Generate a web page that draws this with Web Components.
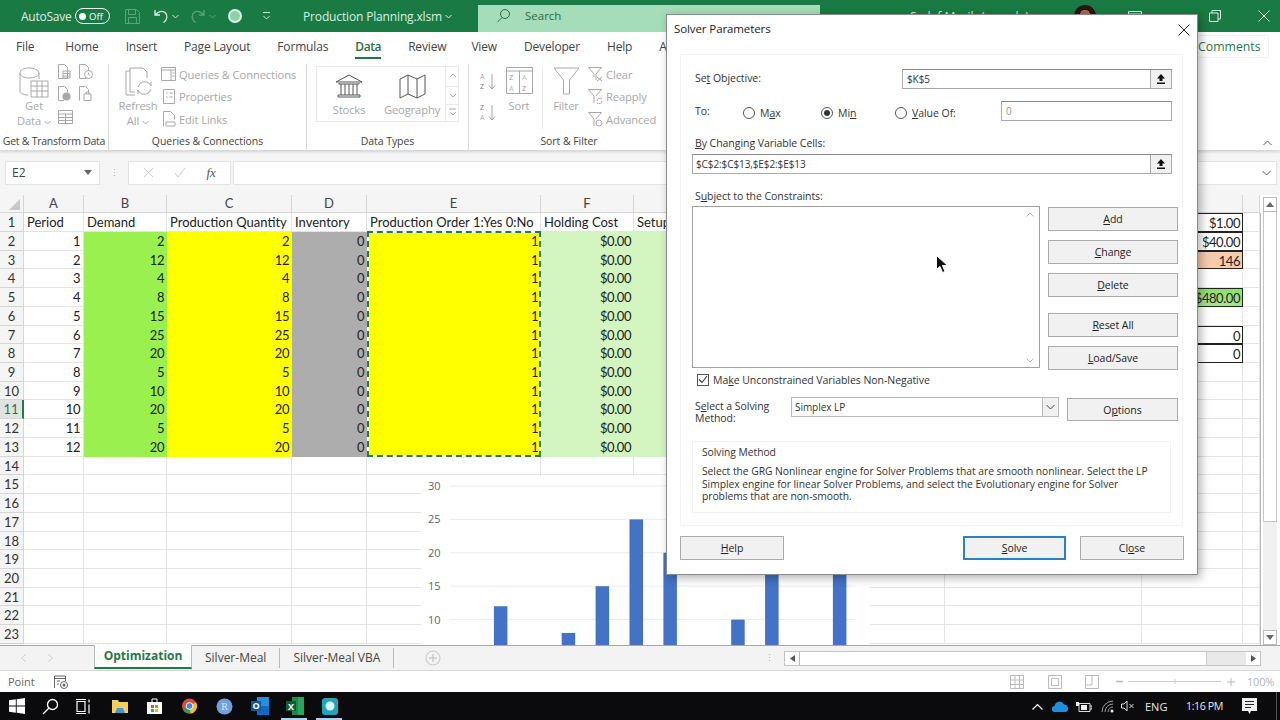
<!DOCTYPE html>
<html><head><meta charset="utf-8"><title>Production Planning</title>
<style>
html,body{margin:0;padding:0;width:1280px;height:720px;overflow:hidden;background:#fff}
body{font-family:"Open Sans","Noto Sans",sans-serif;color:#333}
</style></head>
<body>
<x-app></x-app>
<script>
function reg(tag,css,html){
  customElements.define(tag,class extends HTMLElement{
    constructor(){super();this.attachShadow({mode:'open'});}
    connectedCallback(){
      if(this._done)return;this._done=true;
      this.shadowRoot.innerHTML='<style>'+css+'</style>'+(typeof html==='function'?html(this):html);
    }
  });
}
const S='fill="none" stroke="#a8a8a8" stroke-width="1"';
const chev=(c)=>`<svg width="7" height="5" viewBox="0 0 7 5" style="margin-left:3px;vertical-align:middle"><path d="M.5 1l3 3 3-3" fill="none" stroke="${c||'#a8a8a8'}"/></svg>`;

/* -------- generic pieces -------- */
reg('x-title-bar',`
:host{display:flex;align-items:center;height:32px;background:#1a7a43;color:#dcefe3;font-size:12px;flex:none;box-sizing:border-box;padding-left:21px}
.as{width:50px;letter-spacing:-.25px}
.tog{width:35px;height:16px;margin-left:4px;box-sizing:border-box;border:1.5px solid #fff;border-radius:9px;display:flex;align-items:center;padding-left:3px;gap:3px;font-size:9.5px;color:#fff}
.tog i{width:7px;height:7px;border-radius:50%;background:#fff}
svg{display:block;flex:none}
.file{width:175px;color:#dcefe3;display:flex;align-items:center;font-size:12px;letter-spacing:-.15px}
.search{width:342px;height:27px;margin-top:5px;background:#a5dcb9;color:#2f6b48;display:flex;align-items:center;box-sizing:border-box;padding:0 0 6px 18px;gap:14px;font-size:11.5px}
.user{margin-left:90px;width:153px;font-size:12px;color:#d8ebdf;white-space:nowrap;overflow:hidden}
.av{width:22px;height:22px;border-radius:50%;background:radial-gradient(circle at 50% 45%,#a8694a 0 30%,#2a140c 32%);margin-left:11px}
`,`<span class="as">AutoSave</span><span class="tog"><i></i>Off</span>
<svg style="margin-left:15px" width="15" height="15" viewBox="0 0 15 15"><path d="M.5.5h11l3 3v11H.5zM3.500.5v5h7v-5M3.500 14.500v-6h8v6" fill="none" stroke="#5aa57a"/></svg>
<svg style="margin-left:13px" width="16" height="16" viewBox="0 0 16 16"><path d="M2 2v5h5M2.500 7C5 3.500 9 2.500 12 4.500c3 2.500 2.500 7-1.500 10" fill="none" stroke="#dcefe3" stroke-width="1.300"/></svg>
<svg style="margin-left:3px" width="7" height="5" viewBox="0 0 7 5"><path d="M.5 1l3 3 3-3" fill="none" stroke="#cfe6d8"/></svg>
<svg style="margin-left:11px" width="16" height="16" viewBox="0 0 16 16"><path d="M14 2v5H9M13.500 7C11 3.500 7 2.500 4 4.500c-3 2.500-2.500 7 1.500 10" fill="none" stroke="#5aa57a" stroke-width="1.300"/></svg>
<svg style="margin-left:3px" width="7" height="5" viewBox="0 0 7 5"><path d="M.5 1l3 3 3-3" fill="none" stroke="#5aa57a"/></svg>
<svg style="margin-left:11px" width="16" height="16" viewBox="0 0 16 16"><circle cx="8" cy="8" r="7" fill="#dff0e5"/><circle cx="8" cy="8" r="5" fill="#8fd0a8"/></svg>
<svg style="margin-left:19px" width="9" height="8" viewBox="0 0 9 8"><path d="M1 .5h7M1.500 4l3 3 3-3" fill="none" stroke="#cfe6d8"/></svg>
<span class="file" style="margin-left:32px">Production Planning.xlsm${chev('#dcefe3')}</span>
<span class="search"><svg width="15" height="15" viewBox="0 0 15 15"><circle cx="9" cy="6" r="4.500" fill="none" stroke="#2f6b48"/><path d="M6 9.500L1.500 14" stroke="#2f6b48"/></svg>Search</span>
<span class="user">Sadaf Masih (sample)</span><span class="av"></span>
<svg style="margin-left:32px" width="14" height="14" viewBox="0 0 14 14"><path d="M.5 2.500h13v10H.5zM.5 5h13M7 9V5.500" fill="none" stroke="#dcefe3"/></svg>
<svg style="margin-left:67px" width="12" height="12" viewBox="0 0 12 12"><path d="M.5 3h8.500v8.500H.5zM3 3V.5h8.500V9H9" fill="none" stroke="#dcefe3"/></svg>
<svg style="margin-left:37px" width="12" height="12" viewBox="0 0 12 12"><path d="M.5.5l11 11M11.500.5l-11 11" stroke="#dcefe3"/></svg>`);

reg('x-ribbon-tabs',`
:host{display:flex;align-items:center;height:30px;flex:none;background:#fff;font-size:12px;letter-spacing:-.16px;color:#444;padding:0 0 2px 16px;gap:27px;box-sizing:border-box;position:relative}
span{position:relative;white-space:nowrap}
.on{color:#1f7144;font-weight:600;letter-spacing:-.4px}
.on::after{content:"";position:absolute;left:0;right:0;top:19px;height:2px;background:#1f7a45}
.cm{position:absolute;left:1198px;top:3px;width:70px;height:21px;line-height:21px;border:1px solid #f0f0f0;border-left:0;border-radius:2px;color:#1f7a45;box-sizing:content-box;letter-spacing:0;font-size:12.3px}
`,`<span style="margin-right:4px">File</span><span>Home</span><span>Insert</span><span>Page Layout</span><span>Formulas</span><span class="on">Data</span><span>Review</span><span style="margin-left:-2px">View</span><span>Developer</span><span>Help</span><span>Automate</span><span class="cm">Comments</span>`);

reg('x-rgroup',`
:host{display:flex;flex-direction:column;height:86px;margin-top:2px;border-right:1px solid #d9d9d9;box-sizing:border-box;flex:none;font-size:11.200px;letter-spacing:-.12px;color:#a8a8a8;position:relative}
.b{flex:1;display:flex;min-height:0}
.l{height:16px;line-height:15px;text-align:center;color:#444;font-size:10.500px;letter-spacing:-.05px;white-space:nowrap}
`,t=>`<div class="b"><slot></slot></div><div class="l" style="${t.getAttribute('lstyle')||''}">${t.getAttribute('label')}</div>`);

reg('x-rbig',`
:host{display:flex;flex-direction:column;align-items:center;flex:none;line-height:15px;color:#a8a8a8;white-space:nowrap}
`,`<slot></slot>`);

reg('x-rsmall',`
:host{display:flex;align-items:center;height:22.500px;color:#a8a8a8;white-space:nowrap}
::slotted(svg){flex:none;margin-right:3px}
`,`<slot></slot>`);

reg('x-ribbon',`
:host{display:flex;height:88px;flex:none;background:#fff;box-shadow:0 2px 3px rgba(0,0,0,.14);position:relative;z-index:2}
`,`
<x-rgroup label="Get &amp; Transform Data" lstyle="letter-spacing:-.25px" style="width:109px">
  <x-rbig style="width:58px;margin-left:5px;padding-top:3px">
    <svg width="30" height="31" viewBox="0 0 30 31"><path d="M1 6v18c0 2 3 4 8 4M1 6c0-3 4-5 9-5s10 2 10 5-5 5-10 5S1 9 1 6zM20 6v6" ${S}/><path d="M12 14h17v16H12zM12 19h17M12 24h17M18 14v16M23 14v16" ${S}/></svg>
    <span style="margin-top:0">Get</span><span>Data${chev()}</span>
  </x-rbig>
  <div style="display:grid;grid-template-columns:21px 14px;grid-auto-rows:22px;margin-left:-5px">
    <svg width="13" height="15" viewBox="0 0 13 15"><path d="M.5.5h6l3 3v11h-9zM5 7h7v7H5zM5 9.500h7M5 12h7" ${S}/></svg>
    <svg width="14" height="15" viewBox="0 0 14 15"><path d="M8 14.500H.5V.5h6l3 3v3" ${S}/><circle cx="9.500" cy="10.500" r="4" ${S}/><path d="M9.500 8.500v2l1.500 1" ${S}/></svg>
    <svg width="13" height="15" viewBox="0 0 13 15"><path d="M6 14.500H.5V.5h6l3 3v3" ${S}/><circle cx="8.500" cy="10.500" r="4" fill="#a8a8a8"/></svg>
    <svg width="14" height="15" viewBox="0 0 14 15"><path d="M.5 14.500V.5h6l3 3v3M5 8h7v6.500H5zM7 8V6h3v2" ${S}/></svg>
    <svg width="15" height="14" viewBox="0 0 15 14" style="margin-top:2px"><path d="M.5.5h14v13H.5zM.5 4h14M.5 7.500h14M.5 10.500h14M7.500 4v9.500" ${S}/></svg>
  </div>
</x-rgroup>
<x-rgroup label="Queries &amp; Connections" style="width:198px">
  <x-rbig style="width:54px;padding:3px 0 0 2px">
    <svg width="36" height="31" viewBox="0 0 36 31"><path d="M10 1h13l4 4v6M6 4v24h9M10 1v1M6 4h4" ${S}/><path d="M10 1v24h5" ${S}/><path d="M18 20a7 7 0 0 1 12-3l1 2v-4M31 22a7 7 0 0 1-12 3l-1-2v4" ${S}/></svg>
    <span>Refresh</span><span>All${chev()}</span>
  </x-rbig>
  <div style="display:flex;flex-direction:column;margin:-1px 0 0 -4px">
    <x-rsmall><svg width="15" height="14" viewBox="0 0 15 14"><path d="M.5.5h14v13H.5zM.5 3h14M10 3v10.500M11.500 6h2M11.500 9h2" ${S}/></svg>Queries &amp; Connections</x-rsmall>
    <x-rsmall style="margin-left:2px"><svg width="13" height="15" viewBox="0 0 13 15"><path d="M.5.5h11v14H.5zM3 4h1.500M3 8h1.500M6.500 4h3M6.500 8h3" ${S}/></svg>Properties</x-rsmall>
    <x-rsmall style="margin-left:2px"><svg width="13" height="16" viewBox="0 0 13 16"><path d="M.5 15.500V.5h7l4 4v4M3 11h9v4H3z" ${S}/></svg>Edit Links</x-rsmall>
  </div>
</x-rgroup>
<x-rgroup label="Data Types" style="width:162px">
  <div style="margin:2px 0 0 9px;width:143px;height:56px;box-sizing:border-box;border:1px solid #e8e8e8;display:flex">
    <x-rbig style="width:64px;padding-top:7px">
      <svg width="28" height="25" viewBox="0 0 28 25"><path d="M1 8L14 1l13 7zM4 9v1h20V9M6 10v11M10 10v11M14 10v11M18 10v11M22 10v11M3 21h22v2H3z" fill="none" stroke="#555"/></svg>
      <span style="margin-top:3px">Stocks</span>
    </x-rbig>
    <x-rbig style="width:64px;padding-top:7px">
      <svg width="28" height="25" viewBox="0 0 28 25"><path d="M1 5l8-4 9 4 8-4v19l-8 4-9-4-8 4zM9 1v19M18 5v19" fill="none" stroke="#555"/></svg>
      <span style="margin-top:3px;margin-left:-2px">Geography</span>
    </x-rbig>
    <div style="margin-left:auto;width:14px;border-left:1px solid #e8e8e8;display:grid;grid-template-rows:19px 18px 1fr">
      <svg width="13" height="19" viewBox="0 0 13 19" style="border-bottom:1px solid #e8e8e8"><path d="M4 10l3-3 3 3" ${S}/></svg>
      <svg width="13" height="18" viewBox="0 0 13 18" style="border-bottom:1px solid #e8e8e8"><path d="M4 8l3 3 3-3" ${S}/></svg>
      <svg width="13" height="16" viewBox="0 0 13 16"><path d="M3 5h7M4 8l3 3 3-3" ${S}/></svg>
    </div>
  </div>
</x-rgroup>
<x-rgroup label="Sort &amp; Filter" style="width:200px;border:0">
  <div style="display:flex;flex-direction:column;margin:9px 0 0 11px;width:25px;gap:14px">
    <svg width="17" height="17" viewBox="0 0 17 17"><text x="0" y="6" font-size="7" fill="#aaa" font-family="Open Sans">A</text><text x="0" y="16" font-size="7" fill="#777" font-family="Open Sans">Z</text><path d="M12 1v15M9 12.500l3 3.500 3-3.500" ${S}/></svg>
    <svg width="17" height="17" viewBox="0 0 17 17"><text x="0" y="6" font-size="7" fill="#777" font-family="Open Sans">Z</text><text x="0" y="16" font-size="7" fill="#aaa" font-family="Open Sans">A</text><path d="M12 1v15M9 12.500l3 3.500 3-3.500" ${S}/></svg>
  </div>
  <x-rbig style="width:28px;padding-top:3px;margin-right:9px">
    <svg width="27" height="27" viewBox="0 0 27 27"><path d="M.5.5h26v26H.5zM.5 4h26M13.500 4v22.500" ${S}/><text x="3" y="13" font-size="7.300" fill="#999" font-family="Open Sans">Z</text><text x="3" y="24" font-size="7.300" fill="#bbb" font-family="Open Sans">A</text><text x="16" y="13" font-size="7.300" fill="#bbb" font-family="Open Sans">A</text><text x="16" y="24" font-size="7.300" fill="#999" font-family="Open Sans">Z</text></svg>
    <span style="margin-top:4px">Sort</span>
  </x-rbig>
  <div style="width:1px;height:62px;margin-top:3px;background:#eaeaea;flex:none"></div>
  <x-rbig style="width:46px;padding-top:3px">
    <svg width="27" height="28" viewBox="0 0 27 28"><path d="M1 1h25L16.500 13v14h-6V13z" ${S}/></svg>
    <span style="margin-top:3px">Filter</span>
  </x-rbig>
  <div style="display:flex;flex-direction:column;margin:-1px 0 0 -1px">
    <x-rsmall><svg width="15" height="15" viewBox="0 0 15 15"><path d="M.5.5h13L8 7v6M.5.5L6 7v3M9 10l5 4M14 10l-5 4" ${S}/></svg>Clear</x-rsmall>
    <x-rsmall><svg width="15" height="15" viewBox="0 0 15 15"><path d="M.5.5h13L8 7M.5.500L6 7v7M9 12a3 3 0 0 1 5-2M14 12a3 3 0 0 1-5 2" ${S}/></svg>Reapply</x-rsmall>
    <x-rsmall><svg width="15" height="15" viewBox="0 0 15 15"><path d="M.5.5h13L8 7M.5.500L6 7v7" ${S}/><circle cx="11" cy="11" r="3" ${S}/></svg>Advanced</x-rsmall>
  </div>
</x-rgroup>
<svg style="position:absolute;left:1263px;top:78px" width="9" height="6" viewBox="0 0 9 6"><path d="M.5 5l4-4 4 4" fill="none" stroke="#555"/></svg>`);

reg('x-formula-bar',`
:host{display:flex;align-items:center;height:45px;background:#f5f5f5;flex:none;box-sizing:border-box;padding:0 3px 0 5px;font-size:12px;color:#444}
.box{height:24px;background:#fff;border:1px solid #e3e3e3;box-sizing:border-box;display:flex;align-items:center}
.nb{width:95px;padding:0 7px 0 6px;justify-content:space-between}
.dots{width:28px;text-align:center;color:#aaa;line-height:6px;font-size:9px}
.fx{width:103px;display:flex;justify-content:space-around;padding:0 4px;box-sizing:border-box}
.in{flex:1;margin-left:2px;justify-content:flex-end;padding-right:5px}
i{font-family:"Liberation Serif",serif;color:#555;font-size:13px}
`,`<div class="box nb">E2<svg width="8" height="5" viewBox="0 0 8 5"><path d="M0 0h8L4 5z" fill="#666"/></svg></div>
<div class="dots">⋮</div>
<div class="box fx"><svg width="11" height="11" viewBox="0 0 11 11"><path d="M1 1l9 9M10 1l-9 9" stroke="#ccc"/></svg><svg width="12" height="11" viewBox="0 0 12 11"><path d="M1 6l3 4 7-9" fill="none" stroke="#ccc"/></svg><i>fx</i></div>
<div class="box in"><svg width="9" height="6" viewBox="0 0 9 6"><path d="M.5 1l4 4 4-4" fill="none" stroke="#555"/></svg></div>`);

const ROWS=[2,12,4,8,15,25,20,5,10,20,5,20];
reg('x-sheet',`
:host{display:flex;height:450px;flex:none;background:#fff;position:relative;overflow:hidden}
.g{display:grid;grid-template-columns:24px 60px 83px 125px 75px 174px 93px 107px 129px 75px 197px 101px 17px;grid-template-rows:18px 19px repeat(22,18.730px);width:1260px;height:450px;font:13px Lato,"Open Sans",sans-serif;color:#222;flex:none}
.g>div{box-sizing:border-box;border-right:1px solid #e4e4e4;border-bottom:1px solid #e4e4e4;white-space:nowrap;overflow:hidden;line-height:18px;padding:0 3px}
.g>.h{background:#f5f5f5;color:#444;text-align:center;border-color:#d5d5d5;padding:0;line-height:17px}
.g>.rh{background:#f5f5f5;color:#333;text-align:center;border-color:#d5d5d5;padding:0}
.g>.sel{background:#e2e2e2;color:#1f7a45;border-right:2px solid #1f7a45}
.g>.n{text-align:right;letter-spacing:-.45px}
.g>.gr{background:#99f04f;border:0}.g>.ye{background:#ff0;border:0}.g>.dg{background:#adadad;border:0}.g>.lg{background:#d3f5bf;border:0}
.g>.bx{border:1px solid #222;text-align:right;padding-right:2px;letter-spacing:-.45px}
.g>.or{background:#f8cbad}.g>.ok{background:linear-gradient(#8fe068,#a8e48c)}
.g>.ants{grid-area:3/6/15/7;border:2px solid #fff;background:none;padding:0;margin:-1px 0 0 0;z-index:1;overflow:visible;position:relative}
.ants::before{content:"";position:absolute;inset:-2px;border:2px dashed #1f7d46}
.tri{width:0;height:0;border-left:11px solid transparent;border-bottom:11px solid #c8c8c8;margin:4px 0 0 9px}
x-chart{position:absolute;left:421px;top:281px}
.vs{position:absolute;left:1263px;top:2px;width:14px;height:448px;display:flex;flex-direction:column;box-sizing:border-box}
.vs b{height:15px;border:1px solid #bbb;background:#fff;box-sizing:border-box;display:flex;align-items:center;justify-content:center;flex:none}
.vs u{display:block;height:310px;border:1px solid #c4c4c4;border-top:0;background:#fff;box-sizing:border-box;flex:none}
.vs s{display:block;flex:1;background:#f1f1f1}
.edge{position:absolute;left:1260px;top:18px;bottom:0;width:1px;background:#b8b8b8}
`,()=>{
 const L=['','A','B','C','D','E','F','','','','','',''];
 let h='<div class="g">';
 L.forEach((c,i)=>{h+=`<div class="h" style="grid-area:1/${i+1}">${i===0?'<div class="tri"></div>':c}</div>`});
 const head=['Period','Demand','Production Quantity','Inventory','Production Order 1:Yes 0:No','Holding Cost','Setup Cost'];
 const kvals={1:'$1.00',2:'$40.00',3:'146',5:'$480.00',7:'0',8:'0'};
 for(let r=1;r<=23;r++){
  h+=`<div class="rh${r===11?' sel':''}" style="grid-area:${r+1}/1">${r}</div>`;
  for(let c=0;c<12;c++){
   let cls='',t='';
   if(r===1&&c<7){t=head[c]}
   if(r>=2&&r<=13){
     const v=ROWS[r-2];
     if(c===0){t=r-1;cls='n'}
     if(c===1){t=v;cls='n gr'}
     if(c===2){t=v;cls='n ye'}
     if(c===3){t=0;cls='n dg'}
     if(c===4){t=1;cls='n ye'}
     if(c===5){t='$0.00';cls='n lg'}
     if(c===6||c===7){cls='lg'}
   }
   if(c===10&&kvals[r]){t=kvals[r];cls='bx'+(r===3?' or':r===5?' ok':'')}
   h+=`<div class="${cls}" style="grid-area:${r+1}/${c+2}">${t}</div>`;
  }
 }
 h+='<div class="ants"></div></div><span class="edge"></span><x-chart></x-chart>';
 h+=`<div class="vs"><b><svg width="8" height="5" viewBox="0 0 8 5"><path d="M4 0l4 5H0z" fill="#666"/></svg></b><u></u><s></s><b><svg width="8" height="5" viewBox="0 0 8 5"><path d="M4 5l4-5H0z" fill="#666"/></svg></b></div>`;
 return h;
});

reg('x-chart',`:host{display:block;width:449px;height:169px;background:#fff}svg{display:block}text{font:11px "Open Sans",sans-serif;fill:#666}`,()=>{
 let s='<svg width="449" height="169" viewBox="0 0 449 169">';
 const base=h=>10+(30-h)*6.68;
 [30,25,20,15,10].forEach(v=>{const y=base(v);s+=`<line x1="29" x2="434" y1="${y}" y2="${y}" stroke="#ececec"/><text x="7" y="${y+4}">${v}</text>`});
 ROWS.forEach((v,i)=>{const x=39+33.900*i;const y=base(v);s+=`<rect x="${x}" y="${y}" width="13.500" height="${Math.max(0,180-y)}" fill="#4472c4"/>`});
 return s+'</svg>';
});

reg('x-sheet-tabs',`
:host{display:flex;align-items:center;height:25px;flex:none;background:#f3f3f3;border-top:1px solid #a8a8a8;box-sizing:border-box;font-size:12px;color:#444;position:relative;padding-left:21px}
.nv{width:73px;display:flex;gap:22px;flex:none}
.t{height:23px;line-height:22px;white-space:nowrap}
.on{width:98px;margin-top:-1px;background:#fff;color:#1f7a45;font-weight:700;text-align:center;border-left:1px solid #bbb;border-right:1px solid #bbb;border-bottom:2px solid #1f7a45;box-sizing:border-box;height:24px;align-self:flex-start}
.t2{padding:0 13px;border-right:1px solid #bbb;height:20px;line-height:19px}
.dt{margin-left:321px;color:#aaa;width:15px;text-align:center;line-height:6px;font-size:9px}
.sb{display:flex;width:477px;height:15px;box-sizing:border-box;border:1px solid #c4c4c4;margin-left:7px;background:#e9e9e9;flex:none}
.sb b{width:14px;flex:none;background:#fff;display:flex;align-items:center;justify-content:center}
.sb u{width:408px;flex:none;background:#fff;border-left:1px solid #bbb;border-right:1px solid #ccc;box-sizing:border-box}
.sb s{flex:1}
`,`<div class="nv"><svg width="5" height="8" viewBox="0 0 5 8"><path d="M4.500.5l-4 3.500 4 3.500" fill="none" stroke="#ccc"/></svg><svg width="5" height="8" viewBox="0 0 5 8"><path d="M.5.5l4 3.500-4 3.500" fill="none" stroke="#ccc"/></svg></div>
<div class="t on">Optimization</div><div class="t t2">Silver-Meal</div><div class="t t2">Silver-Meal VBA</div>
<svg width="16" height="16" viewBox="0 0 16 16" style="margin-left:31px"><circle cx="8" cy="8" r="7" fill="none" stroke="#ccc" stroke-width="1.200"/><path d="M8 4v8M4 8h8" stroke="#ccc" stroke-width="1.500"/></svg>
<div class="dt">⋮</div>
<div class="sb"><b><svg width="5" height="7" viewBox="0 0 5 7"><path d="M5 0v7L0 3.500z" fill="#555"/></svg></b><u></u><s></s><b><svg width="5" height="7" viewBox="0 0 5 7"><path d="M0 0v7l5-3.500z" fill="#555"/></svg></b></div>`);

reg('x-status-bar',`
:host{display:flex;align-items:center;height:22px;flex:none;background:#fff;border-top:1px solid #d8d8d8;box-sizing:border-box;font-size:11px;color:#666;padding-left:8px}
svg{flex:none;display:block}
.z{color:#b5b5b5;margin-left:12px;font-size:11px;letter-spacing:-.2px}
`,`<span style="width:46px">Point</span>
<svg width="14" height="14" viewBox="0 0 14 14"><path d="M.5 13V1h11v5M.5 3.500h11M3 6h3M3 9h2" fill="none" stroke="#666"/><circle cx="10" cy="10" r="3.500" fill="none" stroke="#666"/><circle cx="10" cy="10" r="1.500" fill="#666"/></svg>
<svg style="margin-left:942px" width="14" height="14" viewBox="0 0 14 14"><path d="M.5.5h13v13H.5zM.5 5h13M.5 9.500h13M5 .5v13M9.500.5v13" fill="none" stroke="#bbb"/></svg>
<svg style="margin-left:24px" width="14" height="14" viewBox="0 0 14 14"><path d="M.5.5h13v13H.5zM3.500 3.500h7v7h-7z" fill="none" stroke="#bbb"/></svg>
<svg style="margin-left:23px" width="14" height="14" viewBox="0 0 14 14"><path d="M.5.5h13v13H.5zM.5 10h6.500V.5" fill="none" stroke="#bbb"/></svg>
<svg style="margin-left:17px" width="100" height="11" viewBox="0 0 100 11" overflow="visible"><path d="M0 5.500h7" stroke="#bbb" stroke-width="1.500"/><path d="M12 5.500h93M59 3v5" stroke="#ccc"/></svg>
<svg style="margin-left:11px" width="8" height="8" viewBox="0 0 8 8"><path d="M0 4h8M4 0v8" stroke="#bbb"/></svg>
<span class="z">100%</span>`);

reg('x-task-bar',`
:host{display:flex;align-items:center;height:28px;flex:none;background:#0b0b0d;color:#e8e8e8;font-size:11px;box-sizing:border-box;padding-left:9px;position:relative}
svg{flex:none;display:block}
.u{position:absolute;top:26px;height:2px;width:26px;background:#a9d4ee}
.sd{position:absolute;left:1276px;top:0;bottom:0;width:1px;background:#555}
`,`
<svg width="16" height="16" viewBox="0 0 16 16"><path d="M0 2.300L6.800 1.300V7.500H0zM7.700 1.200L16 0v7.500H7.700zM0 8.400h6.800v6.300L0 13.700zM7.700 8.400H16V16l-8.300-1.200z" fill="#fff"/></svg>
<svg style="margin-left:17px" width="17" height="17" viewBox="0 0 17 17"><circle cx="10.500" cy="6.500" r="5" fill="none" stroke="#fff" stroke-width="1.300"/><path d="M7 10l-6 6" stroke="#fff" stroke-width="1.300"/></svg>
<svg style="margin-left:17px" width="16" height="15" viewBox="0 0 16 15"><path d="M1 2.500h8v10H1zM0 .5h10M0 14.500h10M13 .5v3M13 5.500v9" fill="none" stroke="#fff" stroke-width="1.200"/></svg>
<svg style="margin-left:20px" width="16" height="15" viewBox="0 0 16 15"><path d="M0 1h6l1 2h9v11H0z" fill="#f5cf5b"/><path d="M3 14l2-5h6l2 5z" fill="#3f9bd6"/></svg>
<svg style="margin-left:19px" width="15" height="16" viewBox="0 0 15 16"><path d="M0 4h15v12H0z" fill="#fff"/><path d="M5 4V1h5v3" fill="none" stroke="#fff"/><path d="M4 7h3v3H4z" fill="#e5532d"/><path d="M8 7h3v3H8z" fill="#7db922"/><path d="M4 11h3v3H4z" fill="#2c9ae0"/><path d="M8 11h3v3H8z" fill="#fcb813"/></svg>
<svg style="margin-left:20px" width="15" height="16" viewBox="0 0 16 16"><circle cx="8" cy="8" r="8" fill="#de4a3b"/><path d="M8 8L1 12a8 8 0 0 0 8 4z" fill="#2d9e50"/><path d="M8 8l6.900-4A8 8 0 0 1 9 16z" fill="#f4c21e"/><circle cx="8" cy="8" r="3.600" fill="#3f84ee" stroke="#fff"/></svg>
<svg style="margin-left:19px" width="17" height="17" viewBox="0 0 17 17"><circle cx="8.500" cy="8.500" r="8" fill="#6f9fdc"/><text x="8.500" y="12" font-size="10" text-anchor="middle" fill="#dce8f8" font-family="Liberation Serif">R</text></svg>
<svg style="margin-left:18px" width="18" height="18" viewBox="0 0 18 18"><path d="M6 0h12v14H6z" fill="#2a8fd8"/><path d="M6 9h12v9H6z" fill="#0f6cbd"/><path d="M0 4h10v10H0z" fill="#0a5aa3"/><text x="5" y="12" font-size="9" font-weight="700" text-anchor="middle" fill="#fff" font-family="Open Sans">O</text></svg>
<svg style="margin-left:17px" width="18" height="18" viewBox="0 0 18 18"><path d="M6 0h12v18H6z" fill="#1e8a4a"/><path d="M12 0h6v18h-6z" fill="#2aa55e"/><path d="M0 4h10v10H0z" fill="#0d5f30"/><text x="5" y="12.500" font-size="9" font-weight="700" text-anchor="middle" fill="#fff" font-family="Open Sans">X</text></svg>
<svg style="margin-left:17px" width="17" height="17" viewBox="0 0 17 17"><rect x="1" y="0" width="16" height="17" rx="3" fill="#1fa6b8"/><circle cx="9" cy="8" r="4.500" fill="#d8f7fa"/></svg>
<span class="u" style="left:281px"></span><span class="u" style="left:316px"></span>
<svg style="margin-left:694px" width="11" height="7" viewBox="0 0 11 7"><path d="M.5 6.500l5-5 5 5" fill="none" stroke="#fff" stroke-width="1.200"/></svg>
<svg style="margin-left:9px" width="17" height="11" viewBox="0 0 17 11"><path d="M3 11a3 3 0 0 1-.500-6A5 5 0 0 1 12 3.500 4 4 0 0 1 14 11z" fill="#1d8fe0"/></svg>
<svg style="margin-left:7px" width="16" height="11" viewBox="0 0 16 11"><path d="M3 2.500h11v8H3zM14 5h2v3h-2" fill="none" stroke="#ddd"/><path d="M0 1h3v4H0zM5 4h6v5H5z" fill="#eee"/></svg>
<svg style="margin-left:9px" width="13" height="13" viewBox="0 0 13 13"><path d="M1 12a11 11 0 0 1 11-11M4 12a8 8 0 0 1 8-8M7 12a5 5 0 0 1 5-5" fill="none" stroke="#999"/><circle cx="11" cy="11" r="1.500" fill="#eee"/></svg>
<svg style="margin-left:7px" width="14" height="12" viewBox="0 0 14 12"><path d="M.5 4h2.500l3-3v10l-3-3H.5zM8.500 4l4 4M12.500 4l-4 4" fill="none" stroke="#ddd"/></svg>
<span style="margin-left:10px;width:28px">ENG</span>
<span style="margin-left:13px;width:56px;white-space:nowrap;letter-spacing:-.45px;font-size:10.700px">1:16 PM</span>
<svg width="15" height="17" viewBox="0 0 15 17"><path d="M0 0h15v13H9l-1.500 3L6 13H0z" fill="#eee"/><path d="M3 3.500h9M3 6.500h9M3 9.500h6" stroke="#222"/></svg>
<span class="sd"></span>`);

/* -------- dialog pieces -------- */
reg('x-dlg-btn',`
:host{display:flex;align-items:center;justify-content:center;box-sizing:border-box;height:24px;background:#f1f1f1;border:1px solid #ababab;color:#222;font-size:10.500px;flex:none}
:host([default]){border:2px solid #2a7fc6}
`,`<slot></slot>`);

reg('x-ref-field',`
:host{display:flex;height:20px;box-sizing:border-box;border:1px solid #aaa;border-top-color:#888;background:#fff;font-size:10px;color:#333;align-items:center;padding-left:4px;letter-spacing:-.1px}
.t{flex:1;white-space:nowrap}
.b{width:20px;height:18px;background:#f0f0f0;border-left:1px solid #aaa;display:flex;align-items:center;justify-content:center;flex:none}
:host([plain]) .b{display:none}
:host([plain]){color:#a39878}
`,t=>`<span class="t"><slot></slot></span><span class="b"><svg width="10" height="10" viewBox="0 0 10 10"><path d="M5 0l4 4.500H6.500V7h-3V4.500H1zM1 8.500h8V10H1z" fill="#111"/></svg></span>`);

reg('x-radio',`
:host{display:inline-flex;align-items:center;font-size:10.500px;color:#333;white-space:nowrap;margin-top:4px}
i{width:12px;height:12px;border:1px solid #555;border-radius:50%;box-sizing:border-box;margin-right:5px;display:flex;align-items:center;justify-content:center;background:#fff;flex:none}
:host([on]) i::after{content:"";width:6px;height:6px;border-radius:50%;background:#2b3540}
`,`<i></i><slot></slot>`);

reg('x-solver',`
:host{position:absolute;left:666px;top:14px;width:532px;height:561px;box-sizing:border-box;background:#fff;border:1px solid #8a8a8a;box-shadow:3px 3px 9px rgba(0,0,0,.3);font-size:10.500px;color:#333;z-index:5;display:flex;flex-direction:column;letter-spacing:-.05px}
.title{height:39px;flex:none;display:flex;align-items:flex-start;justify-content:space-between;padding:6px 7px 0 7px;box-sizing:border-box;font-size:11.500px;color:#222;letter-spacing:-.1px}
.panel{margin:0 14px 0 13px;height:472px;flex:none;border:1px solid #f3f3f3;box-sizing:border-box;padding:0 4px 0 11px;display:flex;flex-direction:column}
.row{display:flex;align-items:center;flex:none}
.pad{padding-left:3px}
.list{width:348px;height:162px;border:1px solid #a0a0a0;box-sizing:border-box;flex:none;display:flex;flex-direction:column;justify-content:space-between;align-items:flex-end;padding:5px 5px 4px 0}
.btns{width:130px;margin-left:8px;display:flex;flex-direction:column;padding-top:1px}
.btns x-dlg-btn+x-dlg-btn{margin-top:9px}
.btns x-dlg-btn.gap{margin-top:16px}
.chk{width:12px;height:12px;border:1px solid #555;box-sizing:border-box;margin:0 4px 0 5px;flex:none;display:flex;align-items:center;justify-content:center}
.combo{width:268px;height:20px;border:1px solid #bbb;box-sizing:border-box;display:flex;align-items:center;padding-left:3px;font-size:10px;flex:none}
.combo b{margin-left:auto;width:15px;height:18px;background:#f0f0f0;border-left:1px solid #bbb;display:flex;align-items:center;justify-content:center;font-weight:400}
.method{width:479px;height:72px;flex:none;margin-top:20px;border:1px solid #f3f3f3;box-sizing:border-box;padding:4px 10px 4px 9px;line-height:12.300px;font-size:10.300px;letter-spacing:-.03px}
.method p{margin:7px 0 0}
.foot{display:flex;padding:10px 13px 0 13px}
.foot x-dlg-btn{width:104px}
.sm{width:96px;line-height:12px;margin-top:3px;flex:none;box-sizing:content-box}
.sm div{white-space:nowrap}
`,`
<div class="title"><span>Solver Parameters</span><svg width="12" height="12" viewBox="0 0 12 12" style="margin:3px 0 0"><path d="M.5.5l11 11M11.500.5l-11 11" stroke="#222"/></svg></div>
<div class="panel">
  <div class="row pad" style="margin-top:14px;height:20px"><span style="width:207px;margin-top:-2px">Se<u>t</u> Objective:</span><x-ref-field style="width:270px">$K$5</x-ref-field></div>
  <div class="row pad" style="margin-top:12px;height:20px"><span style="width:48px;margin-top:0">To:</span>
    <x-radio style="width:78px"><span>M<u>a</u>x</span></x-radio><x-radio on style="width:74px"><span>Mi<u>n</u></span></x-radio><x-radio style="width:106px"><span><u>V</u>alue Of:</span></x-radio><x-ref-field plain style="width:171px">0</x-ref-field></div>
  <div class="row pad" style="margin-top:15px;height:14px"><span><u>B</u>y Changing Variable Cells:</span></div>
  <div class="row" style="margin-top:4px;height:20px"><x-ref-field style="width:480px;padding-left:3px">$C$2:$C$13,$E$2:$E$13</x-ref-field></div>
  <div class="row pad" style="margin-top:15px;height:14px"><span>S<u>u</u>bject to the Constraints:</span></div>
  <div class="row" style="margin-top:3px;height:164px;align-items:flex-start">
    <div class="list"><svg width="8" height="5" viewBox="0 0 8 5"><path d="M.5 4.500L4 1l3.500 3.500" fill="none" stroke="#bbb"/></svg><svg width="8" height="5" viewBox="0 0 8 5"><path d="M.5.500L4 4 7.500.5" fill="none" stroke="#bbb"/></svg></div>
    <div class="btns"><x-dlg-btn><span><u>A</u>dd</span></x-dlg-btn><x-dlg-btn><span><u>C</u>hange</span></x-dlg-btn><x-dlg-btn><span><u>D</u>elete</span></x-dlg-btn><x-dlg-btn class="gap"><span><u>R</u>eset All</span></x-dlg-btn><x-dlg-btn><span><u>L</u>oad/Save</span></x-dlg-btn></div>
  </div>
  <div class="row" style="margin-top:3px;height:13px"><span class="chk"><svg width="10" height="9" viewBox="0 0 10 9"><path d="M1 4.500l3 3 5-6.500" fill="none" stroke="#333" stroke-width="1.100"/></svg></span><span>Ma<u>k</u>e Unconstrained Variables Non-Negative</span></div>
  <div class="row" style="margin-top:11px;height:24px;align-items:flex-start">
    <div class="sm pad"><div>S<u>e</u>lect a Solving</div><div>Method:</div></div>
    <div class="combo">Simplex LP<b><svg width="9" height="6" viewBox="0 0 9 6"><path d="M.5 1l4 4 4-4" fill="none" stroke="#444"/></svg></b></div>
    <x-dlg-btn style="width:111px;margin-left:8px;margin-top:1px;height:23px"><span>O<u>p</u>tions</span></x-dlg-btn>
  </div>
  <div class="method">Solving Method<p>Select the GRG Nonlinear engine for Solver Problems that are smooth nonlinear. Select the LP Simplex engine for linear Solver Problems, and select the Evolutionary engine for Solver problems that are non-smooth.</p></div>
</div>
<div class="foot"><x-dlg-btn><span><u>H</u>elp</span></x-dlg-btn><x-dlg-btn default style="margin-left:auto;width:103px"><span><u>S</u>olve</span></x-dlg-btn><x-dlg-btn style="margin-left:14px"><span>Cl<u>o</u>se</span></x-dlg-btn></div>`);

reg('x-app',`
:host{display:flex;flex-direction:column;width:1280px;height:720px;position:relative;overflow:hidden}
.cur{position:absolute;left:936px;top:255px;z-index:6}
`,`<x-title-bar></x-title-bar><x-ribbon-tabs></x-ribbon-tabs><x-ribbon></x-ribbon><x-formula-bar></x-formula-bar><x-sheet></x-sheet><x-sheet-tabs></x-sheet-tabs><x-status-bar></x-status-bar><x-task-bar></x-task-bar><x-solver></x-solver>
<svg class="cur" width="12" height="18" viewBox="0 0 12 18"><path d="M.5.500v14l3.500-3 2.500 6 2.500-1-2.500-6h5z" fill="#111" stroke="#fff"/></svg>`);
</script>
</body></html>
